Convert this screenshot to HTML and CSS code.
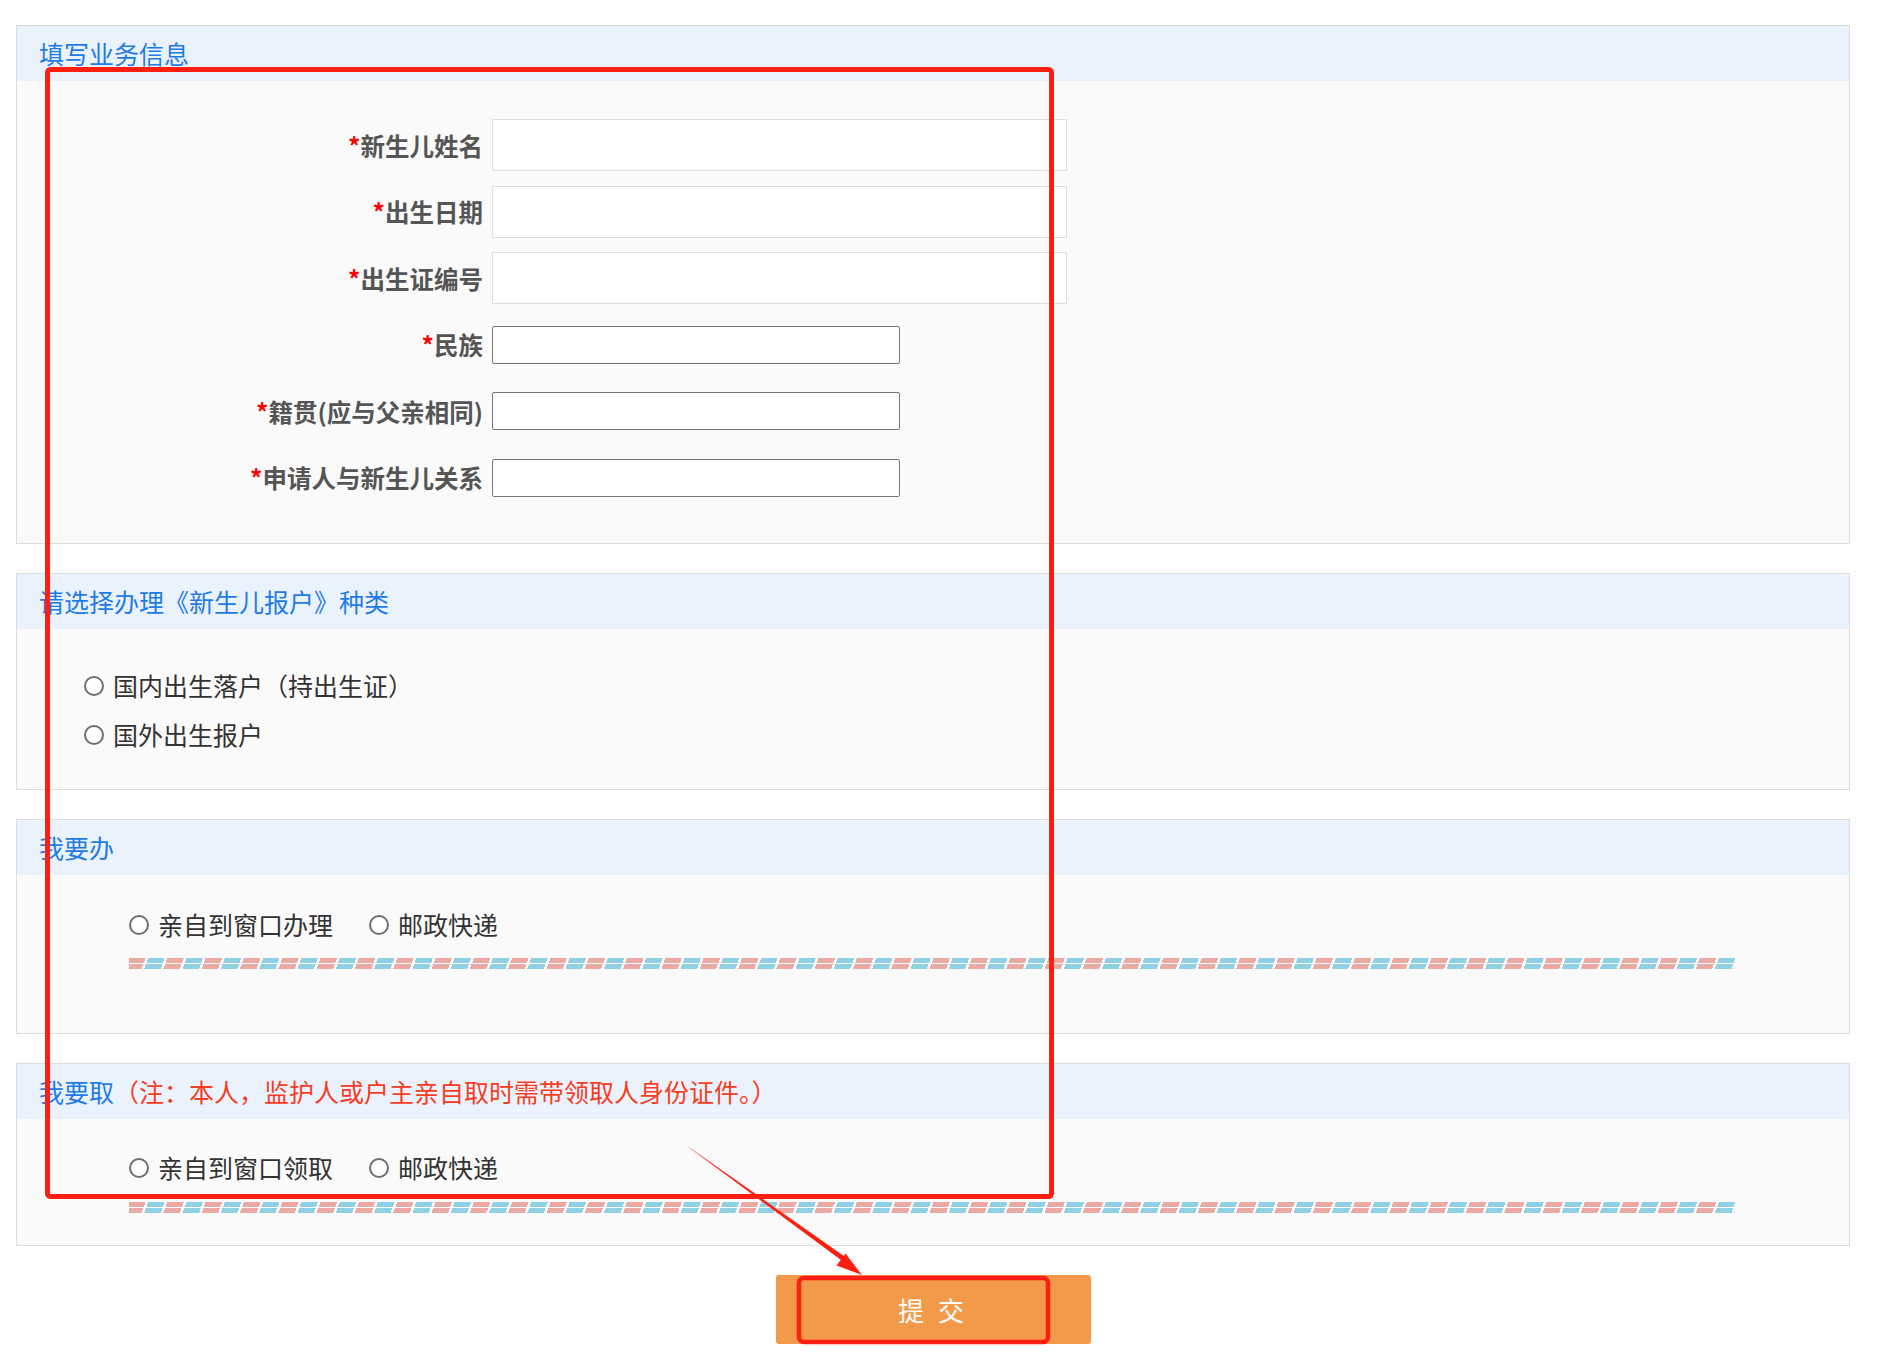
FILE: index.html
```html
<!DOCTYPE html>
<html lang="zh-CN">
<head>
    <meta charset="UTF-8">
    <title>新生儿报户</title>
    <link rel="stylesheet" href="styles.css">
</head>
<body>
    <div class="page">
        <div class="box">
            <div class="box-title">填写业务信息</div>
            <div class="box-body form-grid">
                <label class="f-label"><i>*</i>新生儿姓名</label>
                <input class="ipt-big" type="text">
                <label class="f-label"><i>*</i>出生日期</label>
                <input class="ipt-big" type="text">
                <label class="f-label"><i>*</i>出生证编号</label>
                <input class="ipt-big" type="text">
                <label class="f-label"><i>*</i>民族</label>
                <input class="ipt-small" type="text">
                <label class="f-label"><i>*</i>籍贯(应与父亲相同)</label>
                <input class="ipt-small" type="text">
                <label class="f-label"><i>*</i>申请人与新生儿关系</label>
                <input class="ipt-small" type="text">
            </div>
        </div>

        <div class="box">
            <div class="box-title">请选择办理《新生儿报户》种类</div>
            <div class="box-body kind-list">
                <label class="rd"><input type="radio" name="kind">国内出生落户（持出生证）</label>
                <label class="rd"><input type="radio" name="kind">国外出生报户</label>
            </div>
        </div>

        <div class="box">
            <div class="box-title">我要办</div>
            <div class="box-body way way-do">
                <div class="rd-row">
                    <label class="rd"><input type="radio" name="do">亲自到窗口办理</label>
                    <label class="rd"><input type="radio" name="do">邮政快递</label>
                </div>
                <div class="mail-line"></div>
            </div>
        </div>

        <div class="box">
            <div class="box-title">我要取<span class="note">（注：本人，监护人或户主亲自取时需带领取人身份证件。）</span></div>
            <div class="box-body way way-get">
                <div class="rd-row">
                    <label class="rd"><input type="radio" name="get">亲自到窗口领取</label>
                    <label class="rd"><input type="radio" name="get">邮政快递</label>
                </div>
                <div class="mail-line"></div>
            </div>
        </div>

        <div class="btn-wrap">
            <button class="btn-submit" type="button">提 交</button>
        </div>
    </div>

    <!-- 截图上的红色标注 -->
    <svg class="marks" width="1887" height="1358" viewBox="0 0 1887 1358">
        <rect x="47.5" y="69.5" width="1004" height="1127" rx="3" fill="none" stroke="#ff1f10" stroke-width="5"/>
        <rect x="799" y="1278" width="249" height="64" rx="5" fill="none" stroke="#ff1f10" stroke-width="4.5"/>
        <polygon points="688,1146.4 689,1147.6 843,1261.5 846,1257.5" fill="#ff1f10"/>
        <polygon points="862,1275 836.5,1265.5 845.5,1253.5" fill="#ff1f10"/>
    </svg>
</body>
</html>
```

FILE: styles.css
```css
body{
    margin: 0;
    background: #fff;
    font-family: "Noto Sans CJK SC", "Noto Sans", sans-serif;
    color: #333;
}
.page{
    width: 1834px;
    margin: 25px 0 0 16px;
    padding-bottom: 14px;
}
.box{
    border: 1px solid #dcdcdc;
    background: #fafafa;
    margin-bottom: 29px;
}
.box-title{
    height: 55px;
    line-height: 55px;
    padding-left: 22px;
    background: #eaf2fd;
    color: #1f7be8;
    font-size: 25px;
}
.box-title .note{
    color: #f73d1f;
}

/* 表单部分 */
.form-grid{
    display: grid;
    grid-template-columns: 466px 1fr;
    grid-auto-rows: 52px;
    column-gap: 9px;
    row-gap: 14.6px;
    align-items: center;
    padding: 38px 0 39px;
}
.f-label{
    text-align: right;
    font-size: 24.5px;
    font-weight: bold;
    color: #555;
}
.f-label i{
    font-style: normal;
    color: #f00;
}
.ipt-big{
    box-sizing: border-box;
    width: 575px;
    height: 52px;
    border: 1px solid #dedede;
    background: #fff;
    margin: 0;
}
.ipt-small{
    box-sizing: border-box;
    width: 408px;
    height: 38px;
    border: 1px solid #767676;
    border-radius: 2px;
    background: #fff;
    margin: 0;
}

/* 单选 */
.rd{
    display: flex;
    align-items: center;
    height: 40px;
    font-size: 25px;
    color: #333;
}
.rd input{
    appearance: none;
    -webkit-appearance: none;
    box-sizing: border-box;
    width: 20px;
    height: 20px;
    margin: 3px 9px 0 0;
    border: 2px solid #6e6e6e;
    border-radius: 50%;
    background: #fff;
}
.kind-list{
    display: flex;
    flex-direction: column;
    gap: 9px;
    padding: 36px 0 35px 67px;
}
.way{
    padding-left: 112px;
}
.way-do{
    padding-top: 29px;
    padding-bottom: 64px;
}
.way-get{
    padding-top: 28px;
    padding-bottom: 32px;
}
.rd-row{
    display: flex;
    gap: 36px;
}
.mail-line{
    width: 1606px;
    height: 11px;
    margin-top: 14px;
    background:
        linear-gradient(to bottom, transparent 5px, #fff 5px, #fff 6px, transparent 6px),
        repeating-linear-gradient(110deg, #eba9a4 0 15.5px, transparent 15.5px 18px, #8fd0e4 18px 33.5px, transparent 33.5px 36px);
}
.way-get .mail-line{
    margin-top: 15px;
}

.btn-wrap{
    display: flex;
    justify-content: center;
    margin-top: 2px;
}
.btn-submit{
    width: 315px;
    height: 69px;
    border: none;
    border-radius: 3px;
    background: #f2994a;
    color: #fff;
    font-family: "Noto Sans CJK SC", sans-serif;
    font-size: 26px;
    letter-spacing: 4px;
}

.marks{
    position: absolute;
    top: 0;
    left: 0;
    pointer-events: none;
}
```
